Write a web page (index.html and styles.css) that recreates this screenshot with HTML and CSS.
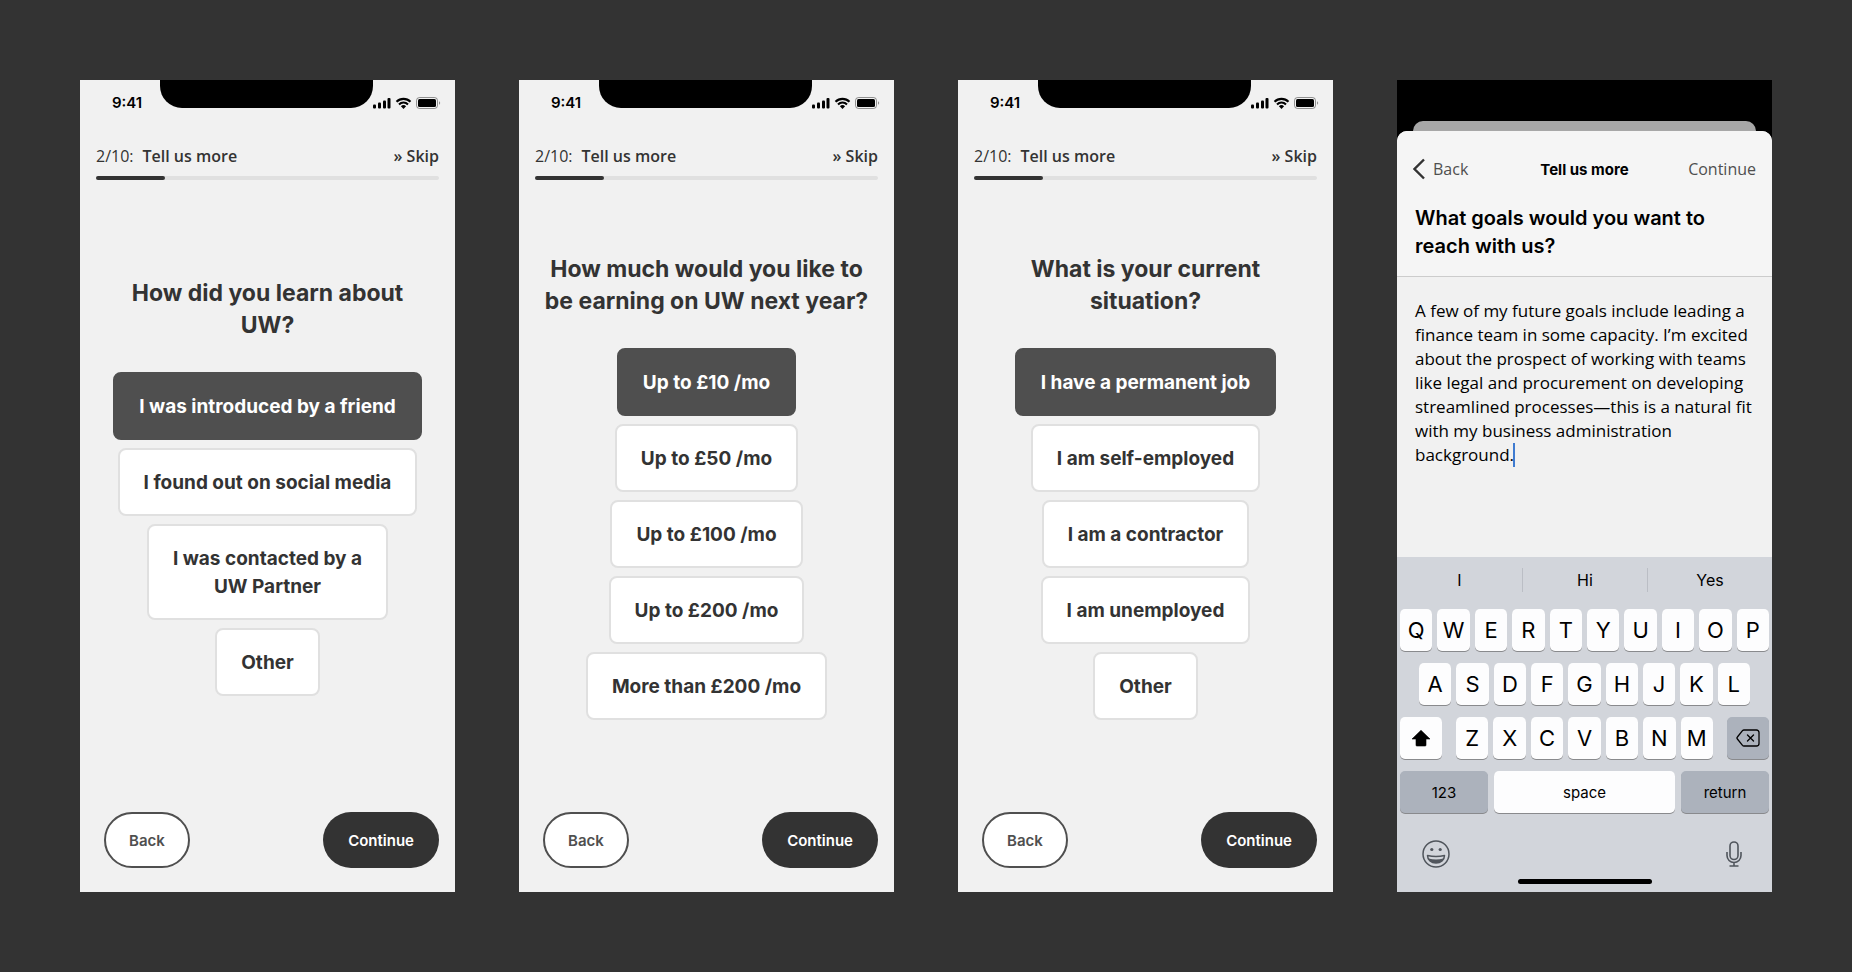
FILE: index.html
```
<!DOCTYPE html>
<html lang="en">
<head>
  <meta charset="UTF-8" />
  <meta name="viewport" content="width=device-width, initial-scale=1" />
  <title>UW Partner onboarding</title>
  <link rel="stylesheet" href="styles.css">
</head>
<body>
  <svg class="sprite" aria-hidden="true">
    <symbol id="status-icons" viewBox="0 0 68 14">
      <rect x="0" y="8.500" width="3" height="4" rx="1" />
      <rect x="5" y="6.500" width="3" height="6" rx="1" />
      <rect x="10" y="4.500" width="3" height="8" rx="1" />
      <rect x="14.500" y="2" width="3" height="10.500" rx="1" />
      <path d="M23.500 5.700a10 10 0 0 1 14 0M26 8.400a6.400 6.400 0 0 1 9 0" fill="none" stroke="#000" stroke-width="2.100" />
      <path d="M27.900 10.300a3.700 3.700 0 0 1 5.200 0L30.500 12.900z" />
      <rect x="43.500" y="1.500" width="21" height="11" rx="3" fill="none" stroke="#000" stroke-opacity=".4" />
      <rect x="45" y="3" width="18" height="8" rx="1.500" />
      <path d="M66 5.200c1.600.6 1.600 3 0 3.600z" opacity=".4" />
    </symbol>
  </svg>

  <main class="board">
    <section class="phone">
      <div class="status">
        <span class="time">9:41</span>
        <span class="notch"></span>
        <svg class="status-icons" viewBox="0 0 68 14"><use href="#status-icons" /></svg>
      </div>
      <header class="steps">
        <span class="count">2/10:</span>
        <span class="step-name">Tell us more</span>
        <a class="skip" href="#">» Skip</a>
      </header>
      <div class="progress"><span style="width: 20%"></span></div>
      <div class="question">
        <h2>How did you learn about<br>UW?</h2>
        <button class="option selected">I was introduced by a friend</button>
        <button class="option">I found out on social media</button>
        <button class="option">I was contacted by a<br>UW Partner</button>
        <button class="option">Other</button>
      </div>
      <footer class="actions">
        <button class="back">Back</button>
        <button class="continue">Continue</button>
      </footer>
    </section>

    <section class="phone">
      <div class="status">
        <span class="time">9:41</span>
        <span class="notch"></span>
        <svg class="status-icons" viewBox="0 0 68 14"><use href="#status-icons" /></svg>
      </div>
      <header class="steps">
        <span class="count">2/10:</span>
        <span class="step-name">Tell us more</span>
        <a class="skip" href="#">» Skip</a>
      </header>
      <div class="progress"><span style="width: 20%"></span></div>
      <div class="question">
        <h2>How much would you like to be earning on UW next year?</h2>
        <button class="option selected">Up to £10 /mo</button>
        <button class="option">Up to £50 /mo</button>
        <button class="option">Up to £100 /mo</button>
        <button class="option">Up to £200 /mo</button>
        <button class="option">More than £200 /mo</button>
      </div>
      <footer class="actions">
        <button class="back">Back</button>
        <button class="continue">Continue</button>
      </footer>
    </section>

    <section class="phone">
      <div class="status">
        <span class="time">9:41</span>
        <span class="notch"></span>
        <svg class="status-icons" viewBox="0 0 68 14"><use href="#status-icons" /></svg>
      </div>
      <header class="steps">
        <span class="count">2/10:</span>
        <span class="step-name">Tell us more</span>
        <a class="skip" href="#">» Skip</a>
      </header>
      <div class="progress"><span style="width: 20%"></span></div>
      <div class="question">
        <h2>What is your current<br>situation?</h2>
        <button class="option selected">I have a permanent job</button>
        <button class="option">I am self-employed</button>
        <button class="option">I am a contractor</button>
        <button class="option">I am unemployed</button>
        <button class="option">Other</button>
      </div>
      <footer class="actions">
        <button class="back">Back</button>
        <button class="continue">Continue</button>
      </footer>
    </section>

    <section class="phone phone-sheet">
      <div class="sheet-behind"></div>
      <div class="sheet">
        <div class="sheet-top">
          <nav class="sheet-nav">
            <a class="nav-back" href="#">
              <svg width="12" height="22" viewBox="0 0 12 22"><path d="M11 1.500L1.500 11 11 20.500" fill="none" stroke="#333" stroke-width="2.400" /></svg>
              Back
            </a>
            <strong>Tell us more</strong>
            <a class="nav-next" href="#">Continue</a>
          </nav>
          <h2><label for="goals">What goals would you want to reach with us?</label></h2>
        </div>
        <div class="editor">
          <textarea id="goals" spellcheck="false">A few of my future goals include leading a
finance team in some capacity. I’m excited
about the prospect of working with teams
like legal and procurement on developing
streamlined processes—this is a natural fit
with my business administration
background.</textarea>
          <span class="caret"></span>
        </div>
        <div class="keyboard">
          <div class="suggestions">
            <button>I</button>
            <button>Hi</button>
            <button>Yes</button>
          </div>
          <div class="keys">
            <button>Q</button><button>W</button><button>E</button><button>R</button><button>T</button><button>Y</button><button>U</button><button>I</button><button>O</button><button>P</button>
          </div>
          <div class="keys keys-middle">
            <button>A</button><button>S</button><button>D</button><button>F</button><button>G</button><button>H</button><button>J</button><button>K</button><button>L</button>
          </div>
          <div class="keys keys-bottom">
            <button class="mod" aria-label="Shift">
              <svg width="20" height="18" viewBox="0 0 20 18"><path d="M10 1.300L19 10h-4v6.200a.8.800 0 0 1-.8.800H5.800a.8.800 0 0 1-.8-.8V10H1z" stroke="#000" stroke-width=".6" stroke-linejoin="round" /></svg>
            </button>
            <div class="letters">
              <button>Z</button><button>X</button><button>C</button><button>V</button><button>B</button><button>N</button><button>M</button>
            </div>
            <button class="mod grey" aria-label="Delete">
              <svg width="24" height="18" viewBox="0 0 24 18" fill="none" stroke="#000" stroke-width="1.300" stroke-linecap="round" stroke-linejoin="round"><path d="M8 1h12.500A2.500 2.500 0 0 1 23 3.500v11a2.500 2.500 0 0 1-2.500 2.500H8a2 2 0 0 1-1.500-.7L1.400 10a1.500 1.500 0 0 1 0-2l5.100-6.300A2 2 0 0 1 8 1zM11.500 6l6 6M17.500 6l-6 6" /></svg>
            </button>
          </div>
          <div class="keys keys-space">
            <button class="grey">123</button>
            <button class="space">space</button>
            <button class="grey">return</button>
          </div>
          <div class="tools">
            <button aria-label="Emoji">
              <svg width="28" height="28" viewBox="0 0 28 28" fill="none" stroke="#50555c" stroke-width="1.500">
                <circle cx="14" cy="14" r="13" />
                <circle cx="9.800" cy="9.500" r="1.600" fill="#50555c" stroke="none" />
                <circle cx="18.200" cy="9.500" r="1.600" fill="#50555c" stroke="none" />
                <path d="M5.500 15.500c5.500 1.300 11.500 1.300 17 0 0 4.500-3.800 7.500-8.500 7.500s-8.500-3-8.500-7.500z" stroke-linejoin="round" />
                <path d="M6.500 18.500c5 1.200 10 1.200 15 0-1.300 3-4 4.500-7.500 4.500s-6.200-1.500-7.500-4.500z" fill="#50555c" stroke="none" />
              </svg>
            </button>
            <button aria-label="Dictate">
              <svg width="16" height="26" viewBox="0 0 16 26" fill="none" stroke="#50555c" stroke-width="1.600">
                <rect x="4" y="1" width="8" height="17.500" rx="4" />
                <path d="M1 11v3.500a7 7 0 0 0 14 0V11M8 21.500v3.500M3.500 25h9" />
              </svg>
            </button>
          </div>
          <div class="home-bar"></div>
        </div>
      </div>
    </section>
  </main>
</body>
</html>
```
FILE: styles.css
```
* {
  box-sizing: border-box;
}
body {
  margin: 0;
  background: #333;
  color: #333;
  font-family: Inter, "Liberation Sans", sans-serif;
}
button {
  font-family: inherit;
  color: inherit;
  border: none;
  padding: 0;
  cursor: pointer;
}
a {
  color: inherit;
  text-decoration: none;
}
.sprite {
  display: none;
}
.board {
  display: grid;
  grid-template-columns: repeat(4, 1fr);
  gap: 64px;
  padding: 80px;
  min-height: 100vh;
}
.phone {
  background: #f1f1f1;
  display: flex;
  flex-direction: column;
}

/* Status bar */
.status {
  display: grid;
  grid-template-columns: 1fr auto 1fr;
  height: 44px;
}
.time {
  align-self: center;
  text-align: center;
  padding: 1px 0 0 14px;
  font-size: 15px;
  font-weight: 600;
  color: #000;
}
.notch {
  width: 213px;
  height: 28px;
  background: #000;
  border-radius: 0 0 22px 22px;
}
.status-icons {
  align-self: center;
  justify-self: end;
  width: 68px;
  height: 14px;
  margin: 2px 14px 0 0;
}

/* Steps */
.steps {
  display: flex;
  align-items: baseline;
  gap: 9px;
  margin-top: 20px;
  padding: 0 16px;
  font-family: "Open Sans", sans-serif;
  font-size: 16px;
  line-height: 24px;
}
.step-name, .skip {
  font-weight: 600;
}
.skip {
  margin-left: auto;
}
.progress {
  height: 4px;
  margin: 8px 16px 0;
  background: #e0e0e0;
  border-radius: 2px;
}
.progress span {
  display: block;
  height: 100%;
  background: #333;
  border-radius: 2px;
}

/* Question */
.question {
  flex: 1;
  display: flex;
  flex-direction: column;
  align-items: center;
  justify-content: center;
  gap: 8px;
  padding: 0 20px;
}
.question h2 {
  margin: 0;
  padding: 1px 0 23px;
  font-size: 23px;
  font-weight: 700;
  line-height: 32px;
  text-align: center;
}
.option {
  padding: 19px 24px 17px;
  background: #fff;
  border: 2px solid #e0e0e0;
  border-radius: 8px;
  font-size: 19px;
  font-weight: 700;
  line-height: 28px;
}
.option.selected {
  background: #4f4f4f;
  border-color: #4f4f4f;
  color: #fff;
}

/* Bottom buttons */
.actions {
  display: flex;
  justify-content: space-between;
  padding: 20px 16px 24px 24px;
}
.back, .continue {
  height: 56px;
  padding: 0 25px;
  border-radius: 28px;
  background: #333;
  color: #fff;
  font-size: 15px;
  font-weight: 600;
}
.back {
  padding: 0 23px;
  background: #fff;
  border: 2px solid #4f4f4f;
  color: #4f4f4f;
}

/* Sheet with keyboard */
.phone-sheet {
  background: #000;
  color: #000;
  padding-top: 41px;
}
.sheet-behind {
  height: 10px;
  margin: 0 16px;
  background: #a7a7a7;
  border-radius: 10px 10px 0 0;
}
.sheet {
  flex: 1;
  display: flex;
  flex-direction: column;
  background: #f1f1f1;
  border-radius: 10px 10px 0 0;
  overflow: hidden;
}
.sheet-top {
  background: #f5f5f5;
  border-bottom: 1px solid #ccc;
  padding: 24px 16px 16px;
}
.sheet-nav {
  display: grid;
  grid-template-columns: 1fr auto 1fr;
  align-items: center;
  height: 28px;
  font-family: "Open Sans", sans-serif;
  font-size: 16px;
}
.sheet-nav strong {
  font-family: Inter, sans-serif;
  font-size: 15px;
}
.nav-back {
  display: flex;
  align-items: center;
  gap: 8px;
}
.nav-back, .nav-next {
  color: #4f4f4f;
}
.nav-next {
  text-align: right;
}
.sheet-top h2 {
  margin: 21px 0 0 2px;
  font-size: 20px;
  font-weight: 600;
  line-height: 28px;
}
.editor {
  position: relative;
  flex: 1;
  display: flex;
}
.editor textarea {
  flex: 1;
  min-width: 0;
  padding: 22px 8px 0 18px;
  border: none;
  outline: none;
  resize: none;
  background: transparent;
  color: #000;
  font-family: "Open Sans", sans-serif;
  font-size: 17px;
  line-height: 24px;
}
.caret {
  position: absolute;
  top: 166px;
  left: 116px;
  width: 2px;
  height: 24px;
  background: #3f7bd0;
}

/* Keyboard */
.keyboard {
  background: #d2d5db;
  padding: 0 3px 8px;
}
.suggestions {
  display: grid;
  grid-template-columns: repeat(3, 1fr);
  margin: 0 -3px;
  padding: 11px 0 17px;
}
.suggestions button {
  height: 24px;
  background: none;
  font-size: 16px;
}
.suggestions button + button {
  border-left: 1px solid #bbbec5;
}
.keys {
  display: flex;
  gap: 5px;
  margin-bottom: 12px;
}
.keys button {
  flex: 1;
  height: 42px;
  background: #fdfdfe;
  border-radius: 5px;
  box-shadow: 0 1px 0 #898a8d;
  font-size: 22px;
}
.keys .grey {
  background: #acb2bc;
}
.keys-middle {
  padding: 0 19px;
}
.keys-bottom {
  gap: 14px;
}
.letters {
  flex: 1;
  display: flex;
  gap: 5px;
}
.keys .mod {
  flex: 0 0 42px;
  display: grid;
  place-items: center;
}
.keys-space {
  display: grid;
  grid-template-columns: 88px 1fr 88px;
  gap: 6px;
}
.keys-space button {
  font-size: 15px;
}
.tools {
  display: flex;
  justify-content: space-between;
  align-items: center;
  padding: 15px 27px 0 22px;
}
.tools button {
  display: flex;
  background: none;
}
.home-bar {
  width: 134px;
  height: 5px;
  margin: 11px auto 0;
  background: #000;
  border-radius: 3px;
}
```
